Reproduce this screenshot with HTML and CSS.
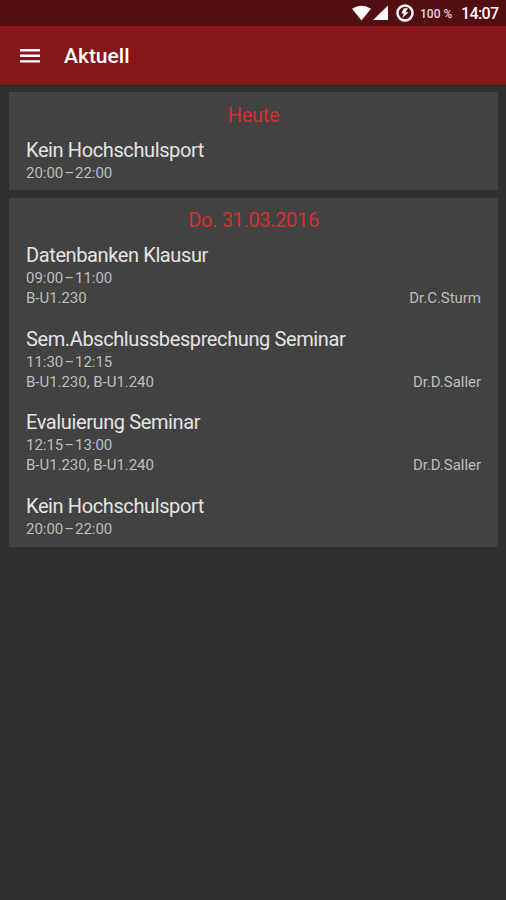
FILE: index.html
```html
<!DOCTYPE html>
<html lang="de">
<head>
<meta charset="utf-8">
<title>Aktuell</title>
<link rel="stylesheet" href="styles.css">
</head>
<body>
<div class="status">
  <svg class="signals" width="37" height="16" viewBox="0 0 37 16"><path fill="#fff" d="M0 3.800Q9.500-2.500 19 3.800L9.500 15.500ZM36 .5V15H21Z"/></svg>
  <svg class="battery" width="18" height="18" viewBox="0 0 18 18"><circle cx="9" cy="9" r="7.500" fill="none" stroke="#fff" stroke-width="2.500"/><path fill="#fff" d="M12 4.300H8L5.300 9.600H8L6.300 14 12.500 8.200H9.700Z"/></svg>
  <span class="percent">100 %</span>
  <span class="clock">14:07</span>
</div>
<header class="bar">
  <svg width="20" height="14" viewBox="0 0 20 14"><path fill="#fff" d="M0 0h20v2.400H0zM0 5.600h20V8H0zM0 11.200h20v2.400H0z"/></svg>
  <h1>Aktuell</h1>
</header>
<main>
  <section class="card">
    <h2>Heute</h2>
    <article><h3>Kein Hochschulsport</h3><p class="time">20:00<i>–</i>22:00</p></article>
  </section>
  <section class="card">
    <h2>Do. 31.03.2016</h2>
    <article><h3>Datenbanken Klausur</h3><p class="time">09:00<i>–</i>11:00</p><p class="place"><span>B-U1.230</span><span>Dr.C.Sturm</span></p></article>
    <article><h3>Sem.Abschlussbesprechung Seminar</h3><p class="time">11:30<i>–</i>12:15</p><p class="place"><span>B-U1.230, B-U1.240</span><span>Dr.D.Saller</span></p></article>
    <article><h3>Evaluierung Seminar</h3><p class="time">12:15<i>–</i>13:00</p><p class="place"><span>B-U1.230, B-U1.240</span><span>Dr.D.Saller</span></p></article>
    <article><h3>Kein Hochschulsport</h3><p class="time">20:00<i>–</i>22:00</p></article>
  </section>
</main>
</body>
</html>
```
FILE: styles.css
```css
* { box-sizing: border-box; }
body { margin: 0; min-height: 900px; background: #303030; color: #e4e4e4; font-family: Roboto, sans-serif; }
h1, h2, h3, p { margin: 0; font-weight: 400; white-space: nowrap; }
svg { display: block; flex: none; }
.status { display: flex; align-items: center; height: 26px; padding-right: 8px; justify-content: flex-end; background: #520e10; color: #fff; }
.battery { margin-left: 7px; }
.percent { margin-left: 6px; padding-top: 1px; font-size: 12px; font-weight: 500; color: #e6dada; width: 34px; white-space: nowrap; }
.clock { margin-left: 7px; padding-top: 1px; font-size: 16px; font-weight: 500; width: 37px; letter-spacing: -0.600px; }
.bar { display: flex; align-items: center; height: 59px; padding-left: 20px; background: #88151a; color: #fff; border-bottom: 1px solid #74161a; box-shadow: 0 1px 2px #202828; }
.bar h1 { margin-left: 24px; padding-top: 2px; font-size: 21px; font-weight: 500; line-height: 24px; }
.bar svg { margin-top: 1px; }
main { display: flex; flex-direction: column; gap: 8px; padding: 7px 8px 0 9px; }
.card { padding: 10px 17px 0; background: #424242; height: 98px; }
.card + .card { height: 349px; padding-top: 9px; }
h2 { height: 36px; color: #d32f2f; font-size: 20px; letter-spacing: -0.330px; line-height: 26px; text-align: center; }
article { height: 83.500px; }
h3 { font-size: 20px; letter-spacing: -0.390px; line-height: 24px; }
p { color: #bdbdbd; font-size: 15px; line-height: 20px; letter-spacing: -0.030px; }
.time { padding-top: 1px; height: 21px; }
i { font-style: normal; margin: 0 1px; }
.place { display: flex; justify-content: space-between; }
```
